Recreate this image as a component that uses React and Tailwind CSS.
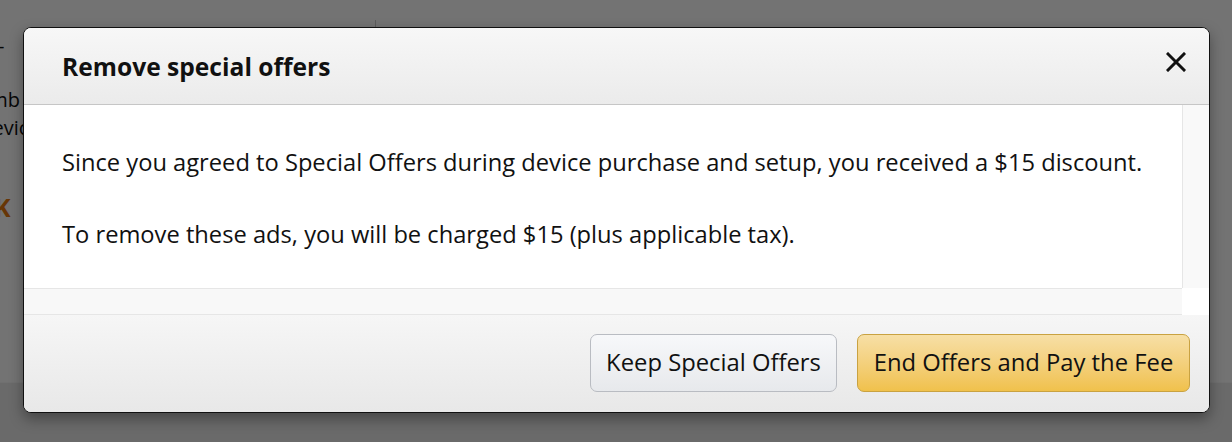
import React from 'react';

const font = { fontFamily: '"Open Sans", "Noto Sans", Arial, sans-serif' };

const CloseIcon = () => (
  <svg width="20" height="20" viewBox="0 0 20 20" fill="none">
    <path d="M2 2L18 18M18 2L2 18" stroke="#111" strokeWidth="3" strokeLinecap="square" />
  </svg>
);

export default function App() {
  return (
    <div className="relative w-[1232px] h-[442px] overflow-hidden bg-white" style={font}>
      {/* page behind the overlay */}
      <div className="flex flex-col h-full">
        <div className="flex flex-1">
          <div className="w-[375px] flex flex-col text-[20px] text-[#111] pt-[34px]">
            <div className="ml-[-2px] leading-[24px]">-</div>
            <div className="ml-[-38px] mt-[28px] leading-[28px]">Numb</div>
            <div className="ml-[-22px] leading-[28px]">Devic</div>
            <div className="ml-[-6px] mt-[50px] leading-[30px] text-[25px] font-bold text-[#e47911]">K</div>
          </div>
          <div className="flex-1 border-l border-[#ccc] mt-[20px]"></div>
        </div>
        <div className="h-[60px] bg-[#ebebeb] border-t border-[#f8f8f8]"></div>
      </div>

      {/* overlay */}
      <div className="absolute inset-0 bg-black/55"></div>

      {/* modal */}
      <div className="absolute left-[23px] top-[27px] w-[1187px] h-[386px] flex flex-col rounded-[8px] border border-[#111] overflow-hidden shadow-[0_6px_14px_rgba(0,0,0,0.35)] bg-white">
        <div className="h-[77px] shrink-0 flex items-center justify-between pl-[38px] pr-[23px] bg-gradient-to-b from-[#f7f7f7] to-[#ebebeb] border-b border-[#c6c6c6]">
          <h2 className="text-[24.6px] font-bold text-[#111] leading-[30px] mt-[2px]">Remove special offers</h2>
          <button className="mt-[-8px]"><CloseIcon /></button>
        </div>

        <div className="flex h-[183px] shrink-0">
          <div className="flex-1 pl-[38px] pt-[41px] text-[23.7px] text-[#111] leading-[32px]">
            <p>Since you agreed to Special Offers during device purchase and setup, you received a $15 discount.</p>
            <p className="mt-[40px]">To remove these ads, you will be charged $15 (plus applicable tax).</p>
          </div>
          <div className="w-[27px] bg-[#f9f9f9] border-l border-[#e6e6e6]"></div>
        </div>

        <div className="flex h-[27px] shrink-0">
          <div className="flex-1 bg-[#f8f8f8] border-y border-[#e6e6e6]"></div>
          <div className="w-[27px] bg-white"></div>
        </div>

        <div className="flex-1 flex items-start justify-end gap-[20px] pt-[19px] pr-[19px] bg-gradient-to-b from-[#f6f6f6] to-[#e8e8e8]">
          <button className="w-[247px] h-[58px] rounded-[7px] border border-[#b9bcc2] bg-gradient-to-b from-[#f7f8fa] to-[#e7e9ec] text-[23.8px] text-[#111] leading-none">
            Keep Special Offers
          </button>
          <button className="w-[333px] h-[58px] rounded-[7px] border border-[#c9a241] bg-gradient-to-b from-[#f7dfa5] to-[#f0c14b] text-[23.8px] text-[#111] leading-none">
            End Offers and Pay the Fee
          </button>
        </div>
      </div>
    </div>
  );
}
